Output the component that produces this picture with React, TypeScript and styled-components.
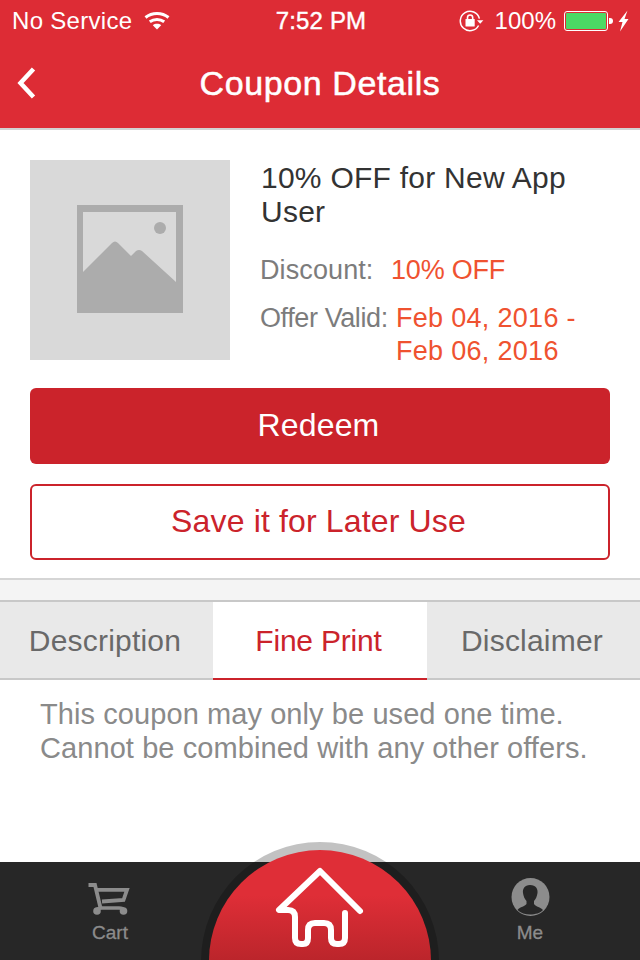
import React from "react";
import styled, { createGlobalStyle } from "styled-components";

const Global = createGlobalStyle`
  html, body { margin: 0; padding: 0; background: #fff; }
  * { box-sizing: border-box; }
  body { font-family: "Liberation Sans", Arial, sans-serif; }
`;

const Page = styled.div`
  position: relative;
  width: 640px;
  height: 960px;
  overflow: hidden;
  display: flex;
  flex-direction: column;
  background: #fff;
`;

const Header = styled.header`
  background: #dd2c35;
  border-bottom: 2px solid #d2d2d2;
  height: 130px;
  flex: none;
  color: #fff;
`;

const StatusBar = styled.div`
  height: 40px;
  display: flex;
  align-items: center;
  padding: 2px 10px 0 12px;
  font-size: 24px;
  position: relative;
`;

const StatusGroup = styled.div<{ $gap: number }>`
  display: flex;
  align-items: center;
  gap: ${(p) => p.$gap}px;
`;

const StatusText = styled.span<{ $spacing?: number }>`
  letter-spacing: ${(p) => p.$spacing ?? 0}px;
`;

const StatusTime = styled.div`
  flex: 1;
  text-align: center;
  -webkit-text-stroke: 0.4px #fff;
  letter-spacing: 0.15px;
  padding-left: 13px;
`;

const NavBar = styled.div`
  height: 88px;
  display: grid;
  grid-template-columns: 80px 1fr 80px;
  align-items: center;
`;

const BackButton = styled.div`
  padding-left: 16px;
  display: flex;
  align-items: center;
  margin-top: -2px;
`;

const Title = styled.h1`
  margin: -2px 0 0;
  text-align: center;
  font-size: 34px;
  font-weight: 400;
  letter-spacing: 0.6px;
  -webkit-text-stroke: 0.5px #fff;
`;

const Summary = styled.section`
  padding: 30px 30px 18px;
  flex: none;
`;

const CouponRow = styled.div`
  display: flex;
  gap: 30px;
  height: 228px;
`;

const Thumb = styled.div`
  width: 200px;
  height: 200px;
  flex: none;
  background: #d9d9d9;
  display: flex;
  align-items: center;
  justify-content: center;
  padding-bottom: 2px;
`;

const Info = styled.div`
  flex: 1;
`;

const CouponName = styled.div`
  font-size: 30px;
  line-height: 34px;
  color: #333;
  margin-top: 1px;
  letter-spacing: 0.25px;
  padding-left: 1px;
`;

const Field = styled.div<{ $top: number }>`
  display: flex;
  font-size: 27px;
  line-height: 33px;
  margin-top: ${(p) => p.$top}px;
`;

const FieldLabel = styled.div<{ $width: number; $spacing: number }>`
  color: #7c7c7c;
  flex: none;
  letter-spacing: ${(p) => p.$spacing}px;
  width: ${(p) => p.$width}px;
`;

const FieldValue = styled.div<{ $spacing: number }>`
  color: #ef5230;
  letter-spacing: ${(p) => p.$spacing}px;
`;

const PrimaryButton = styled.button`
  display: block;
  width: 100%;
  height: 76px;
  border-radius: 6px;
  border: none;
  padding: 0 3px 2px 0;
  background: #cb232b;
  color: #fff;
  letter-spacing: 0.15px;
  font: 400 32px "Liberation Sans", Arial, sans-serif;
`;

const SecondaryButton = styled(PrimaryButton)`
  margin-top: 20px;
  background: #fff;
  border: 2px solid #cb232b;
  color: #cb232b;
`;

const Spacer = styled.div`
  height: 24px;
  flex: none;
  background: #f4f4f4;
  border-top: 2px solid #d5d5d5;
  border-bottom: 2px solid #c8c8c8;
`;

const Tabs = styled.div`
  display: grid;
  grid-template-columns: 213px 214px 213px;
  height: 78px;
  flex: none;
`;

const Tab = styled.div<{ $active?: boolean }>`
  display: flex;
  align-items: center;
  justify-content: center;
  padding: 2px 3px 0 0;
  font-size: 30px;
  letter-spacing: ${(p) => (p.$active ? -0.2 : 0.2)}px;
  color: ${(p) => (p.$active ? "#cb232b" : "#696969")};
  background: ${(p) => (p.$active ? "#fff" : "#e9e9e9")};
  border-bottom: 2px solid ${(p) => (p.$active ? "#cb232b" : "#c8c8c8")};
`;

const Body = styled.div`
  flex: 1;
  padding: 17px 40px 0;
  font-size: 29px;
  line-height: 34px;
  color: #8a8a8a;
  letter-spacing: 0.08px;
`;

const TabBar = styled.nav`
  height: 98px;
  flex: none;
  background: #272727;
  display: grid;
  grid-template-columns: 220px 200px 220px;
`;

const TabItem = styled.div`
  display: flex;
  flex-direction: column;
  align-items: center;
  padding-top: 15px;
  color: #8c8c8c;
  font-size: 19px;
`;

const TabIcon = styled.div`
  height: 40px;
  display: flex;
  align-items: center;
  justify-content: center;
`;

const TabLabel = styled.div`
  margin-top: 5px;
  -webkit-text-stroke: 0.3px #8c8c8c;
`;

const HomeRing = styled.div`
  position: absolute;
  left: 201px;
  top: 842px;
  width: 238px;
  height: 238px;
  border-radius: 50%;
  background: linear-gradient(#c2c2c2 0 20px, #1e1e1e 20px);
  display: flex;
  justify-content: center;
  padding-top: 8px;
`;

const HomeDisc = styled.div`
  width: 222px;
  height: 222px;
  flex: none;
  border-radius: 50%;
  background: linear-gradient(#df2e37 0, #df2e37 45px, #bb252b 110px);
`;

const HomeIcon = styled.svg`
  position: absolute;
  left: 270px;
  top: 862px;
`;

const Chevron = () => (
  <svg width="22" height="34" viewBox="0 0 22 34">
    <path d="M17.5 3 L4.5 17 L17.5 31" fill="none" stroke="#fff" strokeWidth="4.5" />
  </svg>
);

const Wifi = () => (
  <svg width="26" height="20" viewBox="0 0 26 20">
    <g fill="none" stroke="#fff" strokeWidth="3">
      <path d="M1.5 6.5 C8 1.2 18 1.2 24.5 6.5" />
      <path d="M5.8 10.8 C10 7.6 16 7.6 20.2 10.8" />
    </g>
    <path d="M13 18.5 L8.8 14.2 C11 12.4 15 12.4 17.2 14.2 Z" fill="#fff" />
  </svg>
);

const RotationLock = () => (
  <svg width="28" height="22" viewBox="0 0 28 22">
    <path d="M20.4 8.6 A9.7 9.7 0 1 0 19.6 15.5" fill="none" stroke="#fff" strokeWidth="1.5" />
    <path d="M18 10.2 H24.4 L21.2 13.8 Z" fill="#fff" />
    <rect x="6.5" y="9" width="9.2" height="7.6" rx="0.6" fill="#fff" />
    <path d="M8.5 10 V7.6 A2.6 2.6 0 0 1 13.7 7.6 V10" fill="none" stroke="#fff" strokeWidth="1.6" />
  </svg>
);

const Battery = () => (
  <svg width="66" height="22" viewBox="0 0 66 22">
    <rect x="0.5" y="1.5" width="43" height="19" rx="2.5" fill="none" stroke="#fff" />
    <rect x="2" y="3" width="40" height="16" rx="1" fill="#4cd964" />
    <path d="M45 8 H46 A3 3 0 0 1 46 14 H45 Z" fill="#fff" />
    <path d="M63.5 0.5 L54.5 12 H58.5 L56 21.5 L64.5 9 H60.5 Z" fill="#fff" />
  </svg>
);

const Placeholder = () => (
  <svg width="106" height="108" viewBox="0 0 106 108">
    <path
      fillRule="evenodd"
      fill="#acacac"
      d="M0 0 H106 V108 H0 Z M6 7 V67 L35 38 Q38 35 41 38 L54 51 L59 46 Q62 44 65 46 L99 77 V7 Z"
    />
    <circle cx="83" cy="23" r="6" fill="#acacac" />
  </svg>
);

const Cart = () => (
  <svg width="44" height="40" viewBox="0 0 44 40">
    <g fill="none" stroke="#8c8c8c">
      <path d="M0.5 8 H7 L12.5 31" strokeWidth="3.8" />
      <path d="M9 12.8 H39 L35.5 23 L14 24.5" strokeWidth="3.8" />
      <path d="M8.5 33 Q10 31 14 31 H31 Q35 31 36 33" strokeWidth="3.4" />
    </g>
    <circle cx="9" cy="34" r="3.8" fill="#8c8c8c" />
    <circle cx="35.5" cy="34" r="3.8" fill="#8c8c8c" />
  </svg>
);

const Person = () => (
  <svg width="40" height="40" viewBox="0 0 40 40">
    <circle cx="20.5" cy="20" r="19" fill="#8c8c8c" />
    <path
      fill="#272727"
      d="M20 8 C14.5 8 12.5 12 13 16 C13.5 19 14.5 22 16.5 24 L16.5 27 C14 30 9.5 30 7.5 33 C10.5 36 15.5 37.5 20 37.5 C25.5 37.5 30.5 36 33 33 C30.5 30 26 30 24 27 L24 24 C26 22 27 19 27.5 16 C28 12 26 8 20 8 Z"
    />
  </svg>
);

export default function App() {
  return (
    <Page>
      <Global />
      <Header>
        <StatusBar>
          <StatusGroup $gap={12}>
            <StatusText $spacing={0.3}>No Service</StatusText>
            <Wifi />
          </StatusGroup>
          <StatusTime>7:52 PM</StatusTime>
          <StatusGroup $gap={8}>
            <RotationLock />
            <StatusText>100%</StatusText>
            <Battery />
          </StatusGroup>
        </StatusBar>
        <NavBar>
          <BackButton>
            <Chevron />
          </BackButton>
          <Title>Coupon Details</Title>
        </NavBar>
      </Header>
      <Summary>
        <CouponRow>
          <Thumb>
            <Placeholder />
          </Thumb>
          <Info>
            <CouponName>10% OFF for New App User</CouponName>
            <Field $top={25}>
              <FieldLabel $width={131} $spacing={0.1}>Discount:</FieldLabel>
              <FieldValue $spacing={-0.2}>10% OFF</FieldValue>
            </Field>
            <Field $top={15}>
              <FieldLabel $width={136} $spacing={-0.4}>Offer Valid:</FieldLabel>
              <FieldValue $spacing={0.3}>
                Feb 04, 2016 -<br />
                Feb 06, 2016
              </FieldValue>
            </Field>
          </Info>
        </CouponRow>
        <PrimaryButton>Redeem</PrimaryButton>
        <SecondaryButton>Save it for Later Use</SecondaryButton>
      </Summary>
      <Spacer />
      <Tabs>
        <Tab>Description</Tab>
        <Tab $active>Fine Print</Tab>
        <Tab>Disclaimer</Tab>
      </Tabs>
      <Body>
        This coupon may only be used one time.
        <br />
        Cannot be combined with any other offers.
      </Body>
      <TabBar>
        <TabItem>
          <TabIcon>
            <Cart />
          </TabIcon>
          <TabLabel>Cart</TabLabel>
        </TabItem>
        <div />
        <TabItem>
          <TabIcon>
            <Person />
          </TabIcon>
          <TabLabel>Me</TabLabel>
        </TabItem>
      </TabBar>
      <HomeRing>
        <HomeDisc />
      </HomeRing>
      <HomeIcon width="100" height="98" viewBox="270 862 100 98">
        <path
          d="M360 911 L320 871 L279 910 H288 Q295 910 295 917 V938 Q295 944 301 944 H303 Q308 944 308 938 V930 Q308 923 315 923 H324 Q331 923 331 930 V938 Q331 944 337 944 H339 Q345 944 345 938 V913"
          fill="none"
          stroke="#fff"
          strokeWidth="6"
          strokeLinecap="round"
          strokeLinejoin="round"
        />
      </HomeIcon>
    </Page>
  );
}
